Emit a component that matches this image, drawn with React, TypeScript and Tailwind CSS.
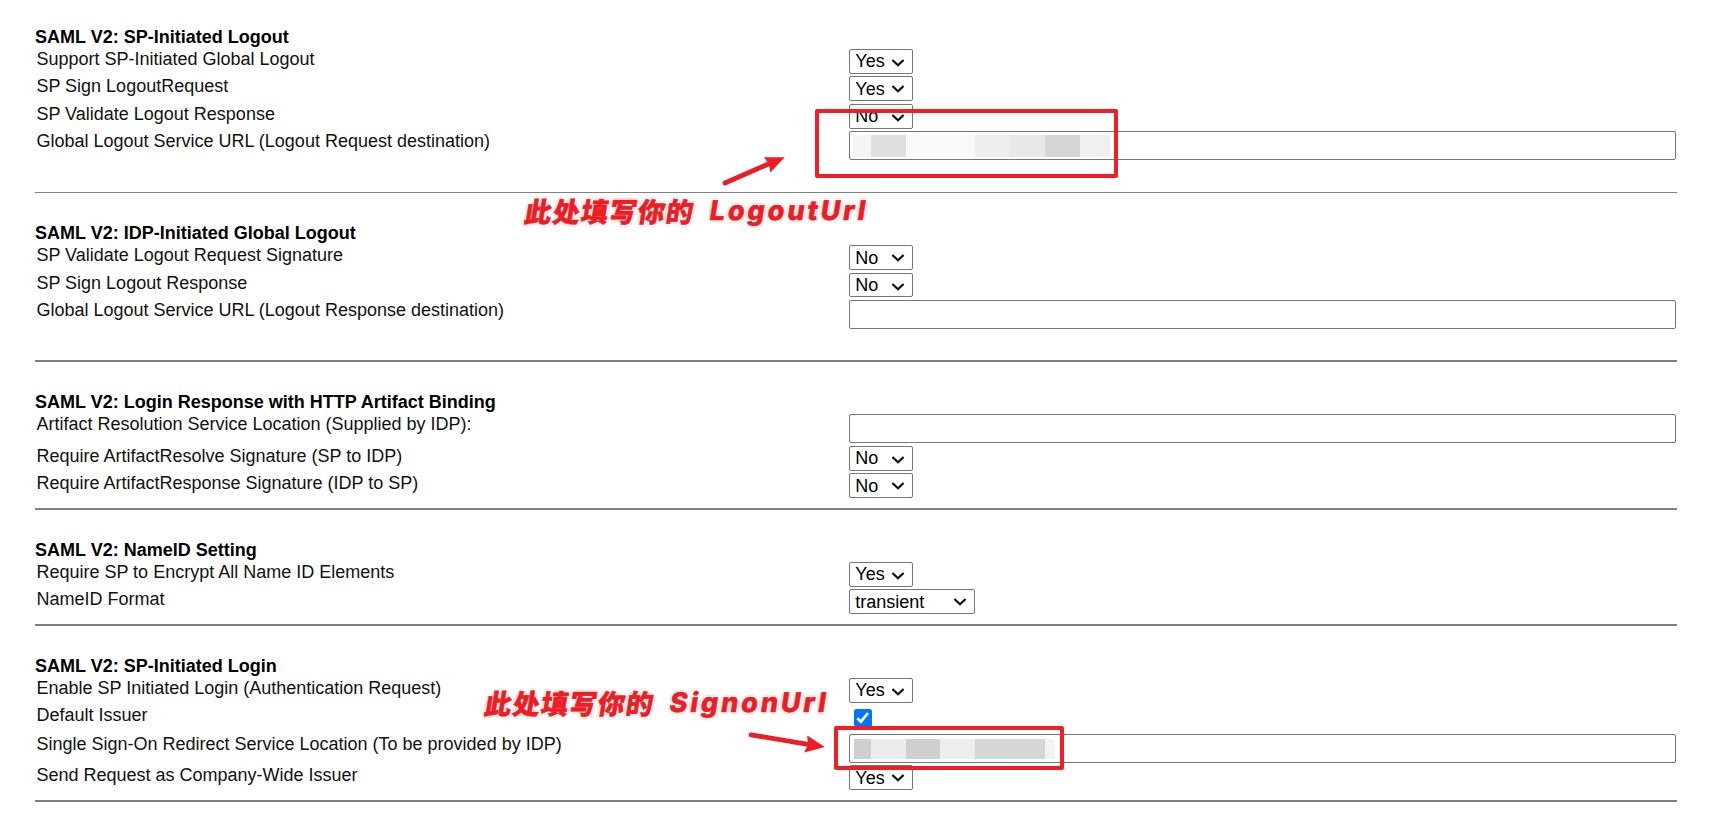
import { useState, type ReactNode } from "react";
import clsx from "clsx";

function Section({ title, children }: { title: string; children: ReactNode }) {
  return (
    <section className="w-[1642px] border-b-2 border-[#808080] pb-[7px] first:border-b">
      <h2 className="h-[22px] font-bold leading-5">{title}</h2>
      {children}
    </section>
  );
}

function Row({ label, height, children }: { label: string; height: string; children: ReactNode }) {
  return (
    <div className={clsx("flex items-start", height)}>
      <div className="w-[814px] shrink-0 pl-[1.4px] leading-5 text-[#111]">{label}</div>
      {children}
    </div>
  );
}

function Select({ value, wide, low, short }: { value: string; wide?: boolean; low?: boolean; short?: boolean }) {
  return (
    <button
      type="button"
      className={clsx(
        "flex items-start justify-between rounded-[2px] border border-[#767676] bg-white pl-[5.3px] pr-[7px] text-left leading-5 text-black",
        wide ? "w-[126px]" : "w-16",
        short ? "h-6" : "h-[25px]",
        low ? "pt-0.5" : "pt-px",
      )}
    >
      <span>{value}</span>
      <svg className={clsx("h-[10px] w-[14px] shrink-0", low ? "mt-[5px]" : "mt-[6.5px]")} viewBox="0 0 14 10" fill="none">
        <path d="M1.4 2 L7 7.2 L12.6 2" stroke="#111" strokeWidth="2.2" />
      </svg>
    </button>
  );
}

function Field({ children, pad = "p-[3px]" }: { children?: ReactNode; pad?: string }) {
  return (
    <div className={clsx("flex h-[29px] w-[827px] items-start rounded-[2px] border border-[#767676] bg-white", pad)}>
      {children}
    </div>
  );
}

function Note({ cjk, latin, place }: { cjk: string; latin: string; place: string }) {
  return (
    <div
      className={clsx(
        "absolute flex h-8 -skew-x-[9deg] items-center whitespace-nowrap font-['Noto_Sans_CJK_SC',sans-serif] text-[27px] font-black leading-8 text-[#ee1c25] [-webkit-text-stroke:0.6px_#ee1c25]",
        "[text-shadow:0_0_1px_#fff,1px_1px_0_#fff,-1px_-1px_0_#fff,1px_-1px_0_#fff,-1px_1px_0_#fff,0_0_3px_#aaa,0_0_4px_#bbb]",
        place,
      )}
    >
      <span className="w-[185px] tracking-[1.3px]">{cjk}</span>
      <span className="font-['Inter','Noto_Sans_CJK_SC',sans-serif] font-extrabold tracking-[2.9px]">{latin}</span>
    </div>
  );
}

export default function App() {
  const [issuer, setIssuer] = useState(true);
  return (
    <div className="relative h-[822px] w-[1724px] overflow-hidden bg-white font-['Liberation_Sans',Arial,sans-serif] text-[18px] text-black">
      <main className="flex flex-col gap-[30px] pl-[35px] pt-[27px]">
        <Section title="SAML V2: SP-Initiated Logout">
          <Row label="Support SP-Initiated Global Logout" height="h-[27px]"><Select value="Yes" /></Row>
          <Row label="SP Sign LogoutRequest" height="h-[28px]"><Select value="Yes" low /></Row>
          <Row label="SP Validate Logout Response" height="h-[27px]"><Select value="No" /></Row>
          <Row label="Global Logout Service URL (Logout Request destination)" height="h-[54px]">
            <Field>
              <div className="flex h-[22px]">
                <i className="w-[18px] bg-[#f4f4f4]" />
                <i className="w-[35px] bg-[#dfdfdf]" />
                <i className="w-[69px] bg-[#f9f9f9]" />
                <i className="w-[35px] bg-[#edefee]" />
                <i className="w-[35px] bg-[#e8e8e8]" />
                <i className="w-[35px] bg-[#d5d7d4]" />
                <i className="w-[30px] bg-[#f0f0f0]" />
              </div>
            </Field>
          </Row>
        </Section>

        <Section title="SAML V2: IDP-Initiated Global Logout">
          <Row label="SP Validate Logout Request Signature" height="h-[28px]"><Select value="No" low /></Row>
          <Row label="SP Sign Logout Response" height="h-[27px]"><Select value="No" short /></Row>
          <Row label="Global Logout Service URL (Logout Response destination)" height="h-[53px]"><Field /></Row>
        </Section>

        <Section title="SAML V2: Login Response with HTTP Artifact Binding">
          <Row label="Artifact Resolution Service Location (Supplied by IDP):" height="h-[32px]"><Field /></Row>
          <Row label="Require ArtifactResolve Signature (SP to IDP)" height="h-[27px]"><Select value="No" /></Row>
          <Row label="Require ArtifactResponse Signature (IDP to SP)" height="h-[28px]"><Select value="No" low /></Row>
        </Section>

        <Section title="SAML V2: NameID Setting">
          <Row label="Require SP to Encrypt All Name ID Elements" height="h-[27px]"><Select value="Yes" /></Row>
          <Row label="NameID Format" height="h-[28px]"><Select value="transient" wide low /></Row>
        </Section>

        <Section title="SAML V2: SP-Initiated Login">
          <Row label="Enable SP Initiated Login (Authentication Request)" height="h-[27px]"><Select value="Yes" /></Row>
          <Row label="Default Issuer" height="h-[29px]">
            <button
              type="button"
              role="checkbox"
              aria-checked={issuer}
              onClick={() => setIssuer(!issuer)}
              className="ml-[5px] mt-1 size-[18px] rounded-[2.5px] bg-[#0075ff]"
            >
              {issuer && (
                <svg className="size-[18px]" viewBox="0 0 18 18" fill="none">
                  <path d="M3.4 9.2 L6.9 12.7 L14 4" stroke="#fff" strokeWidth="2.7" />
                </svg>
              )}
            </button>
          </Row>
          <Row label="Single Sign-On Redirect Service Location (To be provided by IDP)" height="h-[31px]">
            <Field pad="p-1">
              <div className="flex h-5">
                <i className="w-[17px] bg-[#cfcfcf]" />
                <i className="w-[35px] bg-[#ececee]" />
                <i className="w-[34px] bg-[#cfcfcf]" />
                <i className="w-[35px] bg-[#eceeed]" />
                <i className="w-[35px] bg-[#d5d7d4]" />
                <i className="w-[35px] bg-[#d6d6d5]" />
                <i className="w-[10px] bg-[#f3f3f4]" />
              </div>
            </Field>
          </Row>
          <Row label="Send Request as Company-Wide Issuer" height="h-[28px]"><Select value="Yes" low /></Row>
        </Section>
      </main>

      <div className="absolute left-[815px] top-[109px] h-[69px] w-[303px] rounded-[2px] border-4 border-[#f01e26]" />
      <div className="absolute left-[834px] top-[726px] h-[44px] w-[230px] rounded-[2px] border-4 border-[#f01e26]" />

      <svg className="absolute left-[720px] top-[152px] h-[36px] w-[70px]" viewBox="720 152 70 36" fill="#ee1c25">
        <path d="M725 183 L769 163.8" stroke="#ee1c25" strokeWidth="4.8" strokeLinecap="round" />
        <path d="M764 157.2 L784.8 157.2 L770.3 172.5 L769 164 Z" />
      </svg>
      <svg className="absolute left-[744px] top-[728px] h-[30px] w-[86px]" viewBox="744 728 86 30" fill="#ee1c25">
        <path d="M751 734.8 L808 744.3" stroke="#ee1c25" strokeWidth="4.8" strokeLinecap="round" />
        <path d="M807.2 735.4 L824.8 747 L804.2 752.6 L808 744.5 Z" />
      </svg>

      <Note cjk="此处填写你的" latin="LogoutUrl" place="left-[525px] top-[195px]" />
      <Note cjk="此处填写你的" latin="SignonUrl" place="left-[485px] top-[687px]" />
    </div>
  );
}
